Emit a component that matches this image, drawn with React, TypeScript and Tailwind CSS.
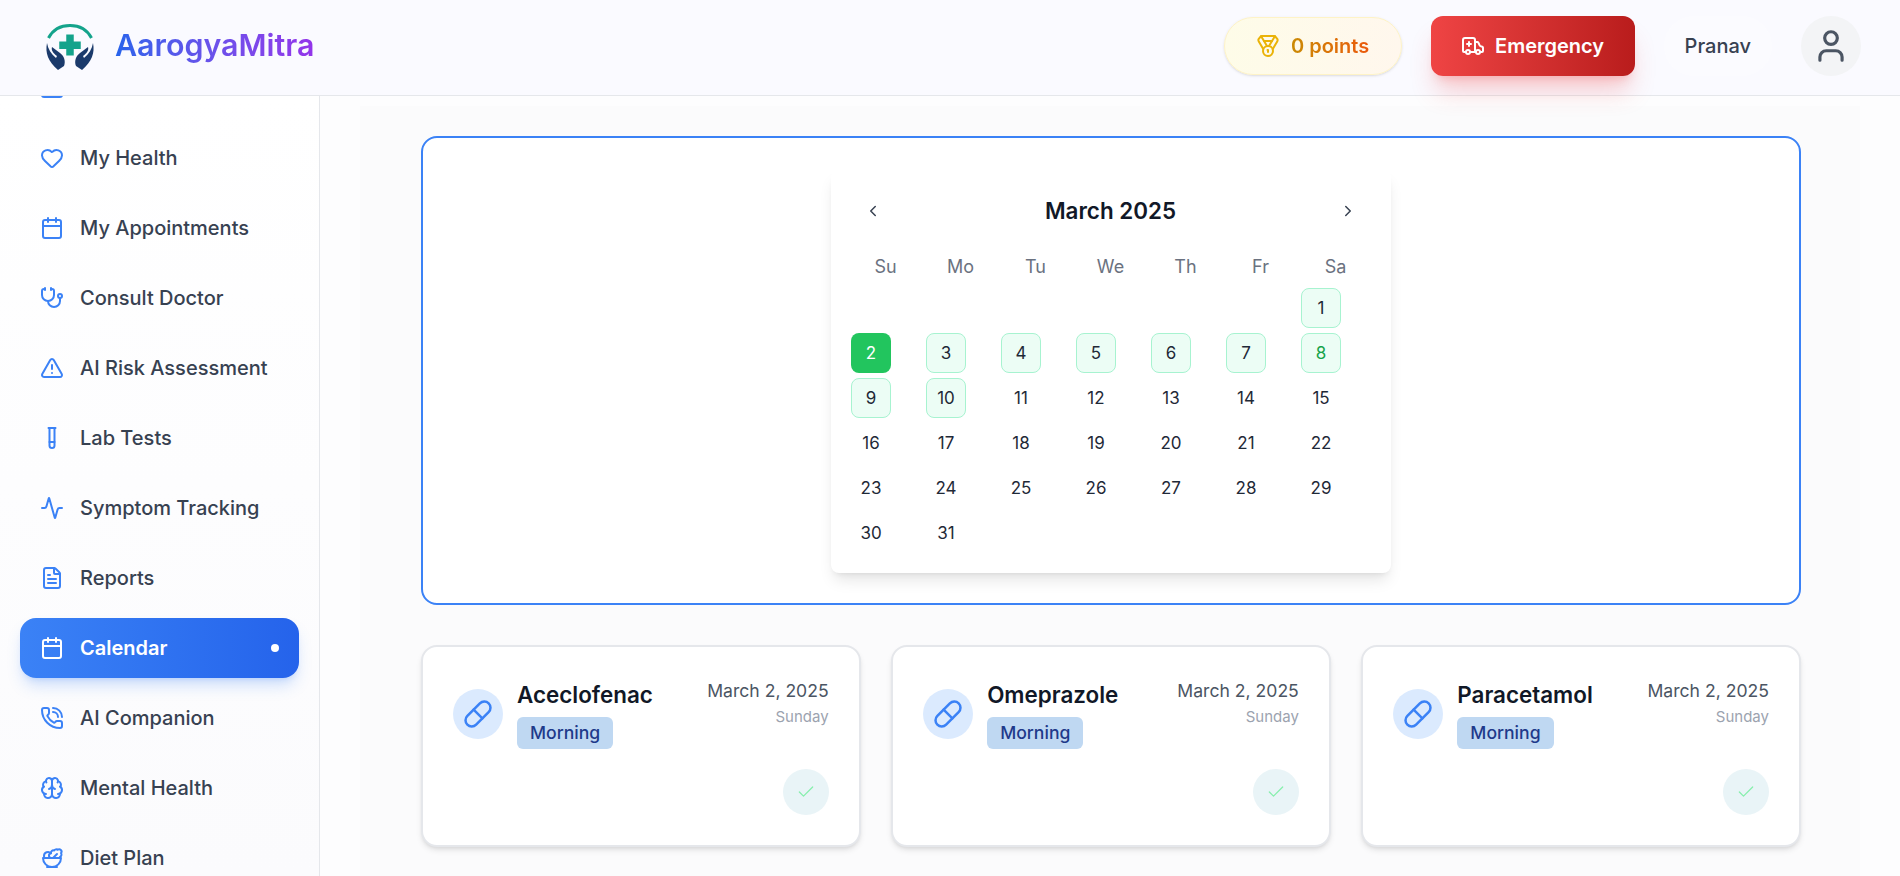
import {
  Activity,
  Ambulance,
  Brain,
  Calendar,
  Check,
  ChevronLeft,
  ChevronRight,
  FileText,
  Heart,
  Hospital,
  Medal,
  PhoneCall,
  Pill,
  Salad,
  Stethoscope,
  TestTube,
  TriangleAlert,
  User,
} from "lucide-react";

const navItems = [
  { label: "Dashboard", icon: Hospital },
  { label: "My Health", icon: Heart },
  { label: "My Appointments", icon: Calendar },
  { label: "Consult Doctor", icon: Stethoscope },
  { label: "AI Risk Assessment", icon: TriangleAlert },
  { label: "Lab Tests", icon: TestTube },
  { label: "Symptom Tracking", icon: Activity },
  { label: "Reports", icon: FileText },
  { label: "Calendar", icon: Calendar, active: true },
  { label: "AI Companion", icon: PhoneCall },
  { label: "Mental Health", icon: Brain },
  { label: "Diet Plan", icon: Salad },
];

const weekDays = ["Su", "Mo", "Tu", "We", "Th", "Fr", "Sa"];
const medicines = ["Aceclofenac", "Omeprazole", "Paracetamol"];

function Logo() {
  return (
    <svg width="50" height="50" viewBox="0 -2 50 50" fill="none">
      <path d="M3.5 15C8 6.500 16 2.500 25 2.500S42 6.500 46.500 15" stroke="#14a38b" strokeWidth="3" />
      <path d="M21.250 11.500h7.500v7h7v7.500h-7v6.500h-7.500V26h-7v-7.500h7z" fill="#14a38b" />
      <path d="M2 20C0 30 3 38 13 47l6-4c2-5 0-10-4-13l-8-6c-1 3 1 6 5 9l-1 2C6 31 3 26 2 20z" fill="#1b3a6b" />
      <path d="M48 20c2 10-1 18-11 27l-6-4c-2-5 0-10 4-13l8-6c1 3-1 6-5 9l1 2c5-4 8-9 9-15z" fill="#1b3a6b" />
    </svg>
  );
}

function NavItem(props: { label: string; icon: typeof Heart; active?: boolean }) {
  const Icon = props.icon;
  if (props.active) {
    return (
      <div className="flex h-[60px] items-center rounded-2xl bg-linear-to-r from-[#3b82f6] to-[#2563eb] pr-5 pl-5 text-white shadow-lg shadow-[#3b82f6]/25">
        <Icon size={24} strokeWidth={2} className="shrink-0" />
        <span className="ml-4 flex-1 text-xl font-semibold">{props.label}</span>
        <span className="size-2 rounded-full bg-white" />
      </div>
    );
  }
  return (
    <div className="flex h-[60px] items-center rounded-2xl pl-5 text-[#374151]">
      <Icon size={24} strokeWidth={2} className="shrink-0 text-[#3b82f6]" />
      <span className="ml-4 text-xl font-medium">{props.label}</span>
    </div>
  );
}

function Day(props: { n: number }) {
  const n = props.n;
  let look = "text-[#1f2937]";
  if (n === 2) look = "bg-[#22c55e] text-white";
  else if (n === 8) look = "border border-[#a7f3d0] bg-[#ecfdf5] text-[#16a34a]";
  else if (n <= 10) look = "border border-[#a7f3d0] bg-[#ecfdf5] text-[#1f2937]";
  return (
    <div className={"flex h-10 w-10 items-center justify-center rounded-lg pt-[2px] text-[17px] " + look}>
      {n}
    </div>
  );
}

function CalendarCard() {
  const cells: (number | null)[] = [null, null, null, null, null, null];
  for (let i = 1; i <= 31; i++) cells.push(i);
  return (
    <div className="h-[403px] w-[560px] rounded-lg bg-white px-5 pt-6 shadow-lg">
      <div className="flex h-[34px] items-center justify-between pr-[14px] pl-[13px] text-[#374151]">
        <ChevronLeft size={18} />
        <span className="text-[22.4px] font-semibold text-[#111827]">March 2025</span>
        <ChevronRight size={18} />
      </div>
      <div className="mt-[25px] grid grid-cols-[repeat(7,75px)]">
        {weekDays.map((d) => (
          <div key={d} className="h-6 pr-[6px] text-center text-lg text-[#6b7280]">
            {d}
          </div>
        ))}
      </div>
      <div className="mt-[11px] grid grid-cols-[repeat(7,75px)] gap-y-[5px]">
        {cells.map((n, i) => (
          <div key={i} className="h-10">
            {n !== null && <Day n={n} />}
          </div>
        ))}
      </div>
    </div>
  );
}

function MedicineCard(props: { name: string }) {
  return (
    <div className="h-[202px] rounded-2xl border-2 border-[#e5e7eb] bg-white px-[30px] pt-[30px] shadow-md">
      <div className="flex h-[72px] items-start">
        <div className="mt-[12px] flex size-[50px] items-center justify-center rounded-full bg-[#dbeafe] text-[#3b82f6]">
          <Pill size={30} strokeWidth={2} />
        </div>
        <div className="ml-[14px] flex-1 pt-1">
          <div className="text-[22.4px] leading-7 font-semibold text-[#111827]">{props.name}</div>
          <span className="mt-2 inline-flex h-8 items-center rounded-md bg-[#bfd8f2] px-[13px] pt-px text-[17.6px] font-medium text-[#1e3a8a]">
            Morning
          </span>
        </div>
        <div className="text-right">
          <div className="text-[17.6px] leading-7 text-[#4b5563]">March 2, 2025</div>
          <div className="mt-[1px] text-[15px] text-[#9ca3af]">Sunday</div>
        </div>
      </div>
      <div className="mt-5 flex justify-end">
        <div className="flex size-[46px] items-center justify-center rounded-full bg-[#e9f4f7] text-[#86efac]">
          <Check size={20} strokeWidth={1.5} />
        </div>
      </div>
    </div>
  );
}

export default function App() {
  return (
    <div className="flex h-screen flex-col overflow-hidden bg-white font-['Inter',sans-serif]">
      <header className="relative z-10 flex h-[96px] shrink-0 items-center justify-between border-b border-[#e5e7eb] bg-[#fafaff] pr-[39px] pb-[3px] pl-[45px]">
        <div className="flex items-center">
          <Logo />
          <span className="ml-5 bg-linear-to-r from-[#2563eb] to-[#9333ea] bg-clip-text text-[30.4px] font-semibold text-transparent">
            AarogyaMitra
          </span>
        </div>
        <div className="flex items-center">
          <div className="flex h-[58px] w-[178px] items-center justify-center rounded-full border border-[#fef3c7] bg-linear-to-r from-[#fefce8] to-[#fff7ed] shadow-sm">
            <Medal size={24} className="text-[#eab308]" />
            <span className="ml-[11px] bg-linear-to-r from-[#ca8a04] to-[#ea580c] bg-clip-text text-xl font-semibold text-transparent">
              0 points
            </span>
          </div>
          <div className="ml-[29px] flex h-[60px] w-[204px] items-center justify-center rounded-xl bg-linear-to-r from-[#ef4444] to-[#b91c1c] text-white shadow-xl shadow-[#ef4444]/25">
            <Ambulance size={24} />
            <span className="ml-[10px] text-xl font-semibold">Emergency</span>
          </div>
          <div className="ml-[29px] flex h-[60px] items-center rounded-full bg-white/30 px-[21px] text-xl font-medium text-[#374151]">
            Pranav
          </div>
          <div className="ml-[29px] flex size-[60px] items-center justify-center rounded-full bg-[#f3f4f6] text-[#4b5563]">
            <User size={38} strokeWidth={2} />
          </div>
        </div>
      </header>
      <div className="flex min-h-0 flex-1">
        <aside className="w-[320px] shrink-0 overflow-hidden border-r border-[#e5e7eb] bg-linear-to-b from-white to-[#fbfbfd]">
          <div className="-mt-[38px] flex flex-col gap-[10px] px-5">
            {navItems.map((item) => (
              <NavItem key={item.label} label={item.label} icon={item.icon} active={item.active} />
            ))}
          </div>
        </aside>
        <main className="min-w-0 flex-1 overflow-hidden bg-[#fdfdfe] px-10 pt-[10px]">
          <div className="h-full bg-[#fbfbfc] pt-[30px] pr-[59px] pl-[61px]">
            <div className="flex h-[469px] items-start justify-center rounded-2xl border-2 border-[#3b82f6] bg-white pt-[32px]">
              <CalendarCard />
            </div>
            <div className="mt-10 grid grid-cols-3 gap-[30.5px]">
              {medicines.map((m) => (
                <MedicineCard key={m} name={m} />
              ))}
            </div>
          </div>
        </main>
      </div>
    </div>
  );
}
